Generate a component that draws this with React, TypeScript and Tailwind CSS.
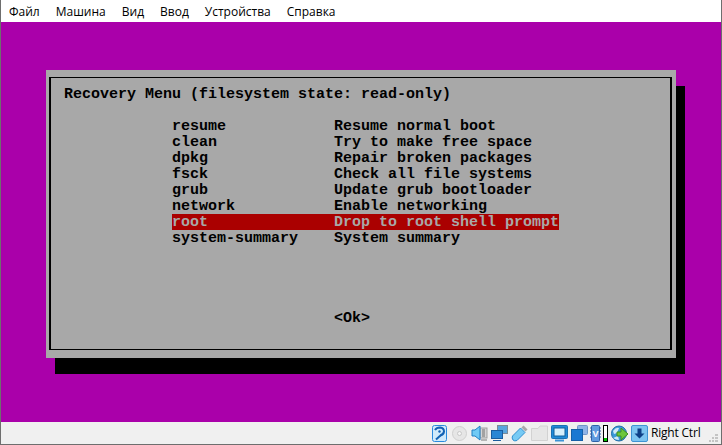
import React from "react";

const menu: [string, string][] = [
  ["resume", "Resume normal boot"],
  ["clean", "Try to make free space"],
  ["dpkg", "Repair broken packages"],
  ["fsck", "Check all file systems"],
  ["grub", "Update grub bootloader"],
  ["network", "Enable networking"],
  ["root", "Drop to root shell prompt"],
  ["system-summary", "System summary"],
];

const mono = "font-['Liberation_Mono',monospace] font-bold text-[15px] leading-[18px] whitespace-pre";

function Hdd() {
  return (
    <svg width="15" height="17" viewBox="0 0 15 17">
      <rect x="0.5" y="0.5" width="14" height="16" rx="2" fill="#cfeafb" stroke="#2a8ade" />
      <path d="M3 5 Q4.5 2.5 8 2.5 Q12 3 12 6.5 Q11.5 10 8 10.5" fill="none" stroke="#1262b4" strokeWidth="2" />
      <circle cx="7.5" cy="6.5" r="1.2" fill="#1262b4" />
      <path d="M8.5 10.5 L4 14.5" stroke="#1262b4" strokeWidth="2" />
    </svg>
  );
}
function Cd() {
  return (
    <svg width="15" height="15" viewBox="0 0 15 15">
      <circle cx="7.5" cy="7.5" r="7" fill="#e6e6e6" stroke="#cfcfcf" />
      <circle cx="7.5" cy="7.5" r="2" fill="#f4f4f4" stroke="#c8c8c8" />
    </svg>
  );
}
function Audio() {
  return (
    <svg width="17" height="17" viewBox="0 0 17 17">
      <rect x="9" y="3" width="7" height="10" fill="#d4d4d4" stroke="#a0a0a0" />
      <path d="M11 5h3M11 7h3M11 9h3M11 11h3" stroke="#707070" />
      <path d="M10 15h6" stroke="#b5b5b5" strokeWidth="2" />
      <path d="M1 5 L4 5 L9 1 L9 15 L4 11 L1 11 Z" fill="#6fcaf5" stroke="#1e7fc4" />
    </svg>
  );
}
function Network() {
  return (
    <svg width="17" height="16" viewBox="0 0 17 16">
      <rect x="6.5" y="0.5" width="10" height="8" fill="#5aa5dd" stroke="#7c8a96" />
      <rect x="0.5" y="5.5" width="11" height="8" fill="#2a86d4" stroke="#1b5c9e" />
      <path d="M2 15.5h8" stroke="#1b5c9e" />
    </svg>
  );
}
function Usb() {
  return (
    <svg width="17" height="17" viewBox="0 0 17 17">
      <path d="M11.5 1.5 L15.5 5.5" stroke="#a8a8a8" strokeWidth="3" />
      <path d="M9.5 3 L14 7.5 L6 15.5 Q3.5 16.5 2 15 Q0.5 13 1.5 11 Z" fill="#76caf4" stroke="#2f8fd0" />
    </svg>
  );
}
function Folder() {
  return (
    <svg width="17" height="16" viewBox="0 0 17 16">
      <path d="M0.5 3.5 L7 3.5 L9 1 L16.5 1 L16.5 15.5 L0.5 15.5 Z" fill="#e6e6e6" stroke="#d2d2d2" />
    </svg>
  );
}
function Display() {
  return (
    <svg width="17" height="17" viewBox="0 0 17 17">
      <rect x="0.5" y="0.5" width="16" height="13" rx="1" fill="#1f8ad8" stroke="#1a6fb4" />
      <rect x="3" y="3" width="11" height="8" fill="#d7effb" stroke="#0f5e9c" />
      <path d="M4 15.5h9" stroke="#3a93d6" strokeWidth="2" />
    </svg>
  );
}
function Capture() {
  return (
    <svg width="17" height="16" viewBox="0 0 17 16">
      <rect x="6.5" y="0.5" width="10" height="9" rx="1" fill="#8fb4e6" stroke="#6f94c8" />
      <rect x="0.5" y="4.5" width="11" height="11" fill="#1a78d2" stroke="#1560a8" />
    </svg>
  );
}
function Chip() {
  return (
    <svg width="11" height="17" viewBox="0 0 11 17">
      <rect x="1.5" y="0.5" width="8" height="16" rx="1" fill="#5f9ade" stroke="#2e62a8" />
      <path d="M0 3h2M0 6h2M0 9h2M0 12h2M9 3h2M9 6h2M9 9h2M9 12h2" stroke="#2e62a8" />
      <text x="5.5" y="12" textAnchor="middle" fontSize="9" fontWeight="700" fill="#fff" fontFamily="Liberation Sans, sans-serif">V</text>
    </svg>
  );
}
function Meter() {
  return (
    <div className="w-[5px] h-[17px] border border-black bg-white flex flex-col justify-end">
      <div className="h-[3px] bg-[#00c000]" />
    </div>
  );
}
function Globe() {
  return (
    <svg width="17" height="17" viewBox="0 0 17 17">
      <circle cx="8" cy="8.5" r="7.5" fill="#3c9ad8" stroke="#1d6aa8" />
      <path d="M2 6 Q5 2 8 3 L6 8 L3 9 Z" fill="#cfe9f8" />
      <path d="M2 13 Q5 15 8 15 L7 11 Z" fill="#cfe9f8" />
      <path d="M6 7 L10 7 L10 3 L17 9 L10 15 L10 11 L6 11 Z" fill="#6cc63c" stroke="#3f8f1f" />
    </svg>
  );
}
function Down() {
  return (
    <svg width="17" height="17" viewBox="0 0 17 17">
      <rect x="0.5" y="0.5" width="16" height="16" rx="1.5" fill="#7cc4f0" stroke="#3f94d4" />
      <path d="M6.5 3.5h4v5h3l-5 5-5-5h3z" fill="#0d3f86" />
    </svg>
  );
}
function Grip() {
  return (
    <svg width="9" height="8" viewBox="0 0 9 8">
      <path d="M6 0h3v2H6zM3 3h2v2H3zM6 3h3v2H6zM0 6h2v2H0zM3 6h2v2H3zM6 6h3v2H6z" fill="#c4c4c4" />
    </svg>
  );
}

const icons = [Hdd, Cd, Audio, Network, Usb, Folder, Display, Capture];

export default function App() {
  return (
    <div className="w-[722px] h-[445px] flex flex-col bg-white border-l border-l-[#6e6e6e] border-r border-r-[#6e6e6e] border-b border-b-[#6e6e6e] overflow-hidden">
      <nav className="h-[22px] shrink-0 flex items-center gap-4 pl-2 pt-px bg-white text-[12px] text-black font-['Open_Sans','Noto_Sans',sans-serif]">
        {["Файл", "Машина", "Вид", "Ввод", "Устройства", "Справка"].map((m) => (
          <span key={m}>{m}</span>
        ))}
      </nav>
      <main className="h-[400px] shrink-0 bg-[#aa00aa] pt-12 pl-[45px]">
        <section className="w-[630px] h-[288px] bg-[#a8a8a8] pt-[7px] pl-[3px] shadow-[9px_16px_0_0_#000]">
          <div className={`w-[623px] h-[273px] border-x-2 border-y border-black pt-2 pl-[13px] text-black ${mono}`}>
            <h1 className="h-4 mb-4">Recovery Menu (filesystem state: read-only)</h1>
            <ul className="ml-[108px]">
              {menu.map(([name, desc]) => (
                <li
                  key={name}
                  className={`w-[387px] h-4 flex ${name === "root" ? "bg-[#aa0000] text-[#a8a8a8]" : ""}`}
                >
                  <span className="w-[162px] shrink-0">{name}</span>
                  <span>{desc}</span>
                </li>
              ))}
            </ul>
            <div className="mt-16 ml-[270px] h-4">{"<Ok>"}</div>
          </div>
        </section>
      </main>
      <footer className="flex-1 bg-[#f0f0f0] flex items-center justify-end pr-[3px]">
        {icons.map((Icon, i) => (
          <div key={i} className="w-5 flex justify-center items-center">
            <Icon />
          </div>
        ))}
        <div className="w-[13px] flex justify-center"><Chip /></div>
        <div className="w-[7px] flex justify-center"><Meter /></div>
        <div className="w-5 flex justify-center"><Globe /></div>
        <div className="w-5 flex justify-center"><Down /></div>
        <span className="ml-[2px] w-[50px] text-[12px] tracking-[-0.2px] text-black whitespace-nowrap font-['Open_Sans','Noto_Sans',sans-serif]">Right Ctrl</span>
        <div className="ml-2 self-end mb-[2px]"><Grip /></div>
      </footer>
    </div>
  );
}
